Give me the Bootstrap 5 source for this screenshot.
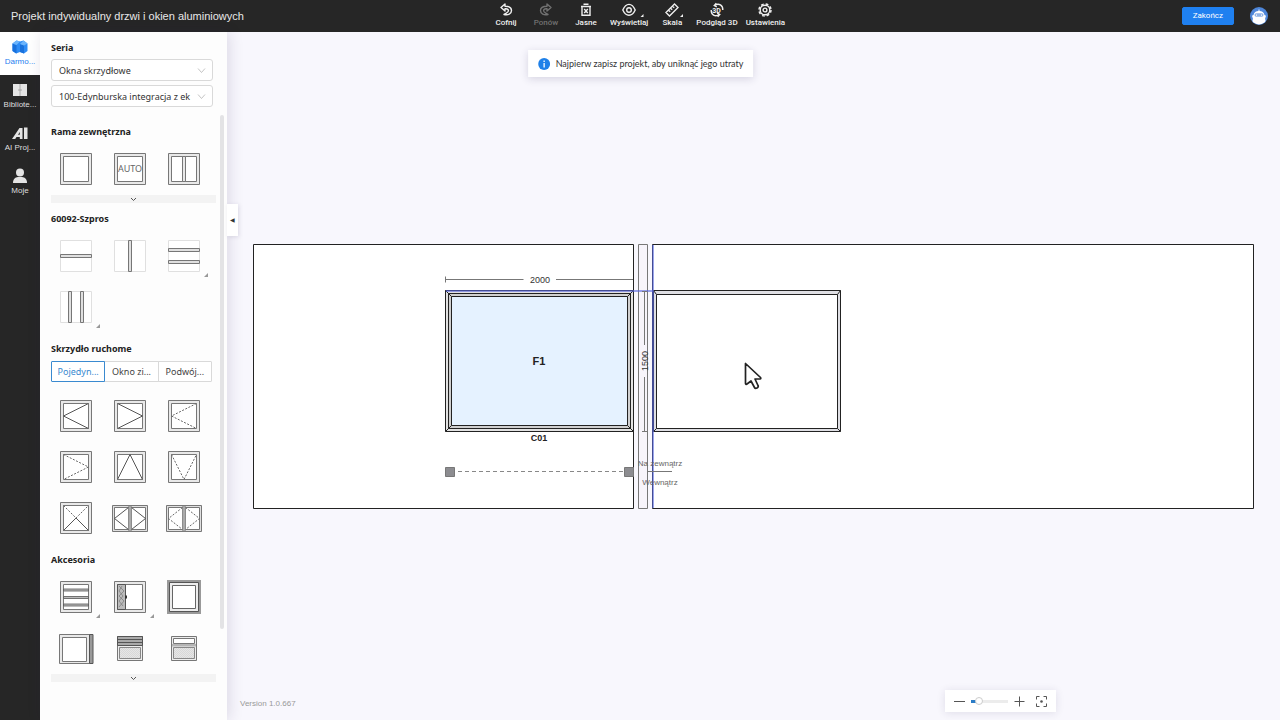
<!DOCTYPE html>
<html lang="pl">
<head>
<meta charset="utf-8">
<meta name="viewport" content="width=device-width, initial-scale=1">
<title>Projekt indywidualny drzwi i okien aluminiowych</title>
<link href="https://cdn.jsdelivr.net/npm/bootstrap@5.3.0/dist/css/bootstrap.min.css" rel="stylesheet">
<style>
  :root { --ink: #262626; --accent: #1f80f0; --ui: "Noto Sans", "Open Sans", sans-serif; --ui2: Roboto, "Liberation Sans", sans-serif; --arial: "Liberation Sans", Arial, sans-serif; }
  body { font-family: var(--ui); font-size: 9px; line-height: 16px; color: #222; background: #f8f7fd; }
  button { font: inherit; }
  .topbar { height: 32px; background: var(--ink); color: #e8e8e8; padding: 0 12px 0 11px; }
  .app-title { font: 11px/16px var(--arial); }
  .tool { min-width: 32px; color: #efefef; font: 500 8px/12px var(--ui2); }
  .tool svg { width: 14px; height: 14px; overflow: visible; }
  .tool:disabled { color: #999; }
  .icon-line { fill: none; stroke: currentColor; stroke-width: 1.4; }
  .btn-finish { --bs-btn-padding-x: 10px; --bs-btn-padding-y: 0; --bs-btn-font-size: 8px; --bs-btn-border-radius: 2px; --bs-btn-bg: var(--accent); --bs-btn-border-color: var(--accent); --bs-btn-line-height: 16px; font-family: var(--ui2); }
  .rail { width: 40px; background: var(--ink); }
  .rail a { height: 43px; padding-top: 7px; color: #dedede; font: 8px/14px var(--arial); }
  .rail a.active { background: #fff; color: var(--accent); }
  .rail svg { width: 16px; height: 16px; }
  .side { width: 187px; background: #fdfdfd; padding: 8px 0 0 11px; box-shadow: 2px 0 14px rgba(40,30,80,.14); z-index: 2; }
  .side h2 { font-size: 9px; line-height: 16px; font-weight: 700; margin: 0 0 4px; }
  .series { width: 162px; gap: 4px; }
  .series h2 { margin: 0 0 -1px; }
  .series .form-select { height: 22px; padding: 0 18px 0 7px; font-size: 9px; line-height: 19px; color: #333; border-color: #d9d9d9; border-radius: 3px; background-color: #fff; background-position: right 6px center; background-size: 9px 9px;
    background-image: url("data:image/svg+xml,%3csvg xmlns='http://www.w3.org/2000/svg' viewBox='0 0 9 9'%3e%3cpath fill='none' stroke='%23b5b5b5' stroke-width='.8' d='M1 2.5l3.5 4 3.5-4'/%3e%3c/svg%3e"); }
  .panel-scroll { padding-right: 3px; }
  .panel-body { width: 165px; padding-top: 9px; }
  .thumb { width: 4px; height: 85%; background: #e3e3e5; border-radius: 2px; }
  .parts { margin-left: -2px; width: 162px; }
  .part { height: 51px; padding: 7px 0 8px; }
  .part svg { width: 36px; height: 36px; display: block; margin: 0 auto; }
  .has-more::after { content: ""; position: absolute; right: 3px; bottom: 5px; border: 2px solid transparent; border-right-color: #999; border-bottom-color: #999; }
  .more-bar { height: 8px; background: #f3f3f3; }
  .sash-tabs { width: 161px; margin-bottom: 9px; }
  .sash-tabs .btn { --bs-btn-padding-x: 2px; --bs-btn-padding-y: 0; --bs-btn-font-size: 9px; --bs-btn-line-height: 19px; --bs-btn-color: #444; --bs-btn-border-color: #d9d9d9; --bs-btn-border-radius: 1px; --bs-btn-bg: #fff; --bs-btn-active-bg: #fff; --bs-btn-active-color: #3a8ad0; --bs-btn-active-border-color: #3a8ad0; width: 54px; }
  .collapse-tab { left: 0; top: 172px; width: 11px; height: 32px; background: #fff; color: #333; font-size: 6px; z-index: 3; box-shadow: 1px 1px 4px rgba(40,30,80,.12); }
  .notice { top: 18px; height: 27px; margin-left: -113px; padding: 0 10px; gap: 6px; background: #fff; box-shadow: 0 2px 8px rgba(40,30,80,.16); white-space: nowrap; color: #333; font-family: Lato, var(--ui); }
  .version { left: 13px; bottom: 8px; color: #999; font: 8px/16px var(--arial); }
  .zoombar { right: 224px; bottom: 8px; width: 111px; height: 22px; padding: 0 9px; background: #fff; color: #555; box-shadow: 0 1px 8px rgba(40,30,80,.12); }
  .zoombar svg { width: 11px; height: 11px; display: block; }
  .zoombar input { -webkit-appearance: none; appearance: none; width: 37px; height: 8px; margin: 0 6px; background: linear-gradient(90deg, #2a7cc7 5px, #ececec 5px) center / 100% 3px no-repeat; }
  .zoombar input::-webkit-slider-thumb { -webkit-appearance: none; width: 8px; height: 8px; border-radius: 50%; background: #fff; border: 1px solid #ccc; }
  .stage svg { display: block; }
  .stage text { font-family: var(--arial); }
</style>
</head>
<body class="d-flex flex-column min-vh-100">

<svg width="0" height="0" class="position-absolute" aria-hidden="true">
  <defs>
    <symbol id="frame" viewBox="-2 -2 36 36"><path d="M.5.5h31v31H.5z" fill="#e9e9e9" stroke="#777"/><path d="M3.500 3.500h25v25h-25z" fill="#fff" stroke="#777"/></symbol>
    <symbol id="ghost" viewBox="-2 -2 36 36"><path d="M.5.5h31v31H.5z" fill="#fff" stroke="#e0e0e0" /></symbol>
    <symbol id="double" viewBox="-2 -2 36 36"><path d="M-1.500 3.500h35v26h-35z" fill="#e0e0e0" stroke="#777"/><path d="M.5 5.500h14v22H.5zM17.500 5.500h14v22h-14z" fill="#fff" stroke="#777"/><path d="M14.500 4h3v25h-3z" fill="#aaa" stroke="#888" stroke-width=".5"/></symbol>
    <pattern id="mesh" width="2" height="2" patternUnits="userSpaceOnUse"><rect width="2" height="2" fill="#e6e6e6"/><path d="M0 0h1v1H0zM1 1h1v1H1z" fill="#d8d8d8"/></pattern>
  </defs>
</svg>

<header class="topbar d-flex align-items-center">
  <div class="col app-title text-nowrap">Projekt indywidualny drzwi i okien aluminiowych</div>
  <nav class="d-flex gap-2 h-100 me-1" aria-label="Narzędzia">
    <button class="tool btn border-0 p-0 d-flex flex-column align-items-center justify-content-center text-nowrap"><svg viewBox="0 0 14 14"><path class="icon-line" d="M6 1L2 4.500L6 8V5.800C9 5.500 10 7 9 8.600C8 10 7 10.500 5 11.500C9 12.500 12.500 11 12.500 7.500C12.500 4.500 10 3.200 6 3.200Z" stroke-linejoin="round"/></svg>Cofnij</button>
    <button class="tool btn border-0 p-0 d-flex flex-column align-items-center justify-content-center text-nowrap" disabled><svg viewBox="0 0 14 14"><path class="icon-line" d="M8 1L12 4.500L8 8V5.800C5 5.500 4 7 5 8.600C6 10 7 10.500 9 11.500C5 12.500 1.500 11 1.500 7.500C1.500 4.500 4 3.200 8 3.200Z" stroke-linejoin="round"/></svg>Ponów</button>
    <button class="tool btn border-0 p-0 d-flex flex-column align-items-center justify-content-center text-nowrap"><svg viewBox="0 0 14 14"><path class="icon-line" d="M2 3.500h10M4.500 1.300h5M3 4v8.300h8V4M5.200 6l3.600 4M8.800 6l-3.600 4"/></svg>Jasne</button>
    <button class="tool btn border-0 p-0 d-flex flex-column align-items-center justify-content-center text-nowrap"><svg viewBox="0 0 14 14"><path class="icon-line" d="M.8 7C4-.5 10-.5 13.200 7C10 14 4 14 .8 7Z"/><circle class="icon-line" cx="7" cy="7" r="2.300"/><path fill="currentColor" d="M21.500 11v3h-3z"/></svg>Wyświetlaj</button>
    <button class="tool btn border-0 p-0 d-flex flex-column align-items-center justify-content-center text-nowrap"><svg viewBox="0 0 14 14"><path class="icon-line" d="M9.500 1L13 4.500L4.500 13L1 9.500ZM3.500 7l1.700 1.700M5.500 5l1.700 1.700M7.500 3l1.700 1.700"/><path fill="currentColor" d="M18 11v3h-3z"/></svg>Skala</button>
    <button class="tool btn border-0 p-0 d-flex flex-column align-items-center justify-content-center text-nowrap"><svg viewBox="0 0 14 14"><path class="icon-line" d="M4.500 2.500C9-.5 13 2.500 12.800 7M9.500 11.500C5 14.500 1 11.500 1.200 7M6.300.3L4.300 2.500l2.500 1.300M7.700 13.700l2-2.200L7.200 10.200" stroke-width="1.200"/><text x="6.500" y="9.500" text-anchor="middle" font-size="7" font-weight="700" fill="currentColor">3D</text></svg>Podgląd 3D</button>
    <button class="tool btn border-0 p-0 d-flex flex-column align-items-center justify-content-center text-nowrap"><svg viewBox="0 0 14 14"><circle class="icon-line" cx="7" cy="7" r="4.800"/><circle cx="7" cy="7" r="6" fill="none" stroke="currentColor" stroke-width="1.500" stroke-dasharray="2.700 2.012"/><circle class="icon-line" cx="7" cy="7" r="1.900"/></svg>Ustawienia</button>
  </nav>
  <div class="col d-flex justify-content-end align-items-center gap-3">
    <button class="btn btn-primary btn-finish">Zakończ</button>
    <svg width="18" height="18" viewBox="0 0 18 18" role="img" aria-label="Profil"><circle cx="9" cy="9" r="9" fill="#4e86d8"/><path d="M3.500 8C4 5 6 4.200 8.500 4V2.500h1V4C12 4.200 14 5 14.500 8l1.500.7L15 12c1 1.500.5 2.800-1 3.800a9 9 0 0 1-10 0C2.500 14.800 2 13.500 3 12L2 8.700Z" fill="#fff"/><rect x="4.500" y="6.300" width="9" height="3.500" rx="1.700" fill="#8fb2e6"/><path d="M6.500 7.500v1.200M11.500 7.500v1.200" stroke="#fff"/></svg>
  </div>
</header>

<div class="d-flex flex-fill">
  <nav class="rail flex-shrink-0" aria-label="Sekcje">
    <a href="#" class="active d-flex flex-column align-items-center text-decoration-none text-nowrap"><svg viewBox="0 0 16 16"><path d="M.5 4.500L4.500 1.500 8 2.500l3.500-1 4 3v7.500L12 14.500 8 13l-4 1.500L.5 12z" fill="#2e8cf5"/><path d="M.5 4.500L4.500 6v8.500L.5 12zM8 5l4 1.500v8L8 13z" fill="#1971dc"/><path d="M.5 4.500l4-3L8 2.500 4.500 6zM8 5l3.500-3.500 4 3L12 6.500z" fill="#6bb4fc"/></svg>Darmo...</a>
    <a href="#" class="d-flex flex-column align-items-center text-decoration-none text-nowrap"><svg viewBox="0 0 16 16"><path d="M1 2h14v12H1z" fill="#e4e4e4"/><path d="M8 2v12M6 8h4" stroke="#999" stroke-width=".8"/></svg>Bibliote...</a>
    <a href="#" class="d-flex flex-column align-items-center text-decoration-none text-nowrap"><svg viewBox="0 0 16 16"><path d="M0 14L7.500 3h3v11H7.800v-2H4.500L3.200 14zM6 9.800h1.800V7zM12 2.500h3.500V14H12z" fill="#e4e4e4" fill-rule="evenodd"/></svg>AI Proj...</a>
    <a href="#" class="d-flex flex-column align-items-center text-decoration-none text-nowrap"><svg viewBox="0 0 16 16"><circle cx="8" cy="4.500" r="4" fill="#e4e4e4"/><path d="M1 15c0-4 2-5.500 5-6h4c3 .5 5 2 5 6z" fill="#e4e4e4"/></svg>Moje</a>
  </nav>

  <aside class="side flex-shrink-0 d-flex flex-column">
    <div class="series d-flex flex-column">
      <h2>Seria</h2>
      <select class="form-select" aria-label="Typ"><option>Okna skrzydłowe</option></select>
      <select class="form-select" aria-label="Model"><option>100-Edynburska integracja z ek</option></select>
    </div>
    <div class="panel-scroll d-flex flex-fill justify-content-between mt-2">
      <div class="panel-body">
        <section class="mb-2">
          <h2>Rama zewnętrzna</h2>
          <div class="parts row row-cols-3 g-0">
            <button class="part btn border-0" aria-label="Rama"><svg><use href="#frame"/></svg></button>
            <button class="part btn border-0" aria-label="Rama automatyczna"><svg viewBox="-2 -2 36 36"><use href="#frame" x="-2" y="-2" width="36" height="36"/><text x="16" y="19" text-anchor="middle" font-size="9" fill="#666">AUTO</text></svg></button>
            <button class="part btn border-0" aria-label="Rama dzielona"><svg viewBox="-2 -2 36 36"><use href="#frame" x="-2" y="-2" width="36" height="36"/><path d="M14.500 3.500h3v25h-3z" fill="#e9e9e9" stroke="#777"/></svg></button>
          </div>
          <button class="more-bar btn border-0 rounded-0 p-0 w-100 d-flex justify-content-center align-items-center" aria-label="Rozwiń ramy"><svg width="7" height="5"><path d="M1 1l2.500 2.500L6 1" fill="none" stroke="#555"/></svg></button>
        </section>
        <section class="mb-2">
          <h2>60092-Szpros</h2>
          <div class="parts row row-cols-3 g-0">
            <button class="part btn border-0" aria-label="Szpros poziomy"><svg viewBox="-2 -2 36 36"><use href="#ghost" x="-2" y="-2" width="36" height="36"/><path d="M.5 14.500h31v3H.5z" fill="#e0e0e0" stroke="#777"/></svg></button>
            <button class="part btn border-0" aria-label="Szpros pionowy"><svg viewBox="-2 -2 36 36"><use href="#ghost" x="-2" y="-2" width="36" height="36"/><path d="M14.500.5h3v31h-3z" fill="#e0e0e0" stroke="#777"/></svg></button>
            <button class="part btn border-0 position-relative has-more" aria-label="Dwa szprosy poziome"><svg viewBox="-2 -2 36 36"><use href="#ghost" x="-2" y="-2" width="36" height="36"/><path d="M.5 8.500h31v3H.5zM.5 20.500h31v3H.5z" fill="#e0e0e0" stroke="#777"/></svg></button>
            <button class="part btn border-0 position-relative has-more" aria-label="Dwa szprosy pionowe"><svg viewBox="-2 -2 36 36"><use href="#ghost" x="-2" y="-2" width="36" height="36"/><path d="M8.500.5h3v31h-3zM20.500.5h3v31h-3z" fill="#e0e0e0" stroke="#777"/></svg></button>
          </div>
        </section>
        <section class="mb-2">
          <h2>Skrzydło ruchome</h2>
          <div class="sash-tabs btn-group" role="group" aria-label="Rodzaj skrzydła">
            <button class="btn active text-nowrap">Pojedyn...</button>
            <button class="btn text-nowrap">Okno zi...</button>
            <button class="btn text-nowrap">Podwój...</button>
          </div>
          <div class="parts row row-cols-3 g-0">
            <button class="part btn border-0" aria-label="Lewe"><svg viewBox="-2 -2 36 36"><use href="#frame" x="-2" y="-2" width="36" height="36"/><path d="M28.500 3.500L3.500 16l25 12.500" fill="none" stroke="#555"/></svg></button>
            <button class="part btn border-0" aria-label="Prawe"><svg viewBox="-2 -2 36 36"><use href="#frame" x="-2" y="-2" width="36" height="36"/><path d="M3.500 3.500L28.500 16l-25 12.500" fill="none" stroke="#555"/></svg></button>
            <button class="part btn border-0" aria-label="Lewe do wewnątrz"><svg viewBox="-2 -2 36 36"><use href="#frame" x="-2" y="-2" width="36" height="36"/><path d="M28.500 3.500L3.500 16l25 12.500" fill="none" stroke="#666" stroke-dasharray="2 1.500"/></svg></button>
            <button class="part btn border-0" aria-label="Prawe do wewnątrz"><svg viewBox="-2 -2 36 36"><use href="#frame" x="-2" y="-2" width="36" height="36"/><path d="M3.500 3.500L28.500 16l-25 12.500" fill="none" stroke="#666" stroke-dasharray="2 1.500"/></svg></button>
            <button class="part btn border-0" aria-label="Uchylne"><svg viewBox="-2 -2 36 36"><use href="#frame" x="-2" y="-2" width="36" height="36"/><path d="M3.500 28.500L16 3.500l12.500 25" fill="none" stroke="#555"/></svg></button>
            <button class="part btn border-0" aria-label="Odchylne"><svg viewBox="-2 -2 36 36"><use href="#frame" x="-2" y="-2" width="36" height="36"/><path d="M3.500 3.500L16 28.500l12.500-25" fill="none" stroke="#666" stroke-dasharray="2 1.500"/></svg></button>
            <button class="part btn border-0" aria-label="Rozwierno-uchylne"><svg viewBox="-2 -2 36 36"><use href="#frame" x="-2" y="-2" width="36" height="36"/><path d="M3.500 28.500L16 16l12.500 12.500" fill="none" stroke="#555"/><path d="M3.500 3.500L16 16l12.500-12.500" fill="none" stroke="#666" stroke-dasharray="2 1.500"/></svg></button>
            <button class="part btn border-0" aria-label="Dwuskrzydłowe"><svg viewBox="-2 -2 36 36"><use href="#double" x="-2" y="-2" width="36" height="36"/><path d="M14.500 5.500L.5 16.500l14 11M17.500 5.500l14 11-14 11" fill="none" stroke="#555"/></svg></button>
            <button class="part btn border-0" aria-label="Dwuskrzydłowe do wewnątrz"><svg viewBox="-2 -2 36 36"><use href="#double" x="-2" y="-2" width="36" height="36"/><path d="M14.500 5.500L.5 16.500l14 11M17.500 5.500l14 11-14 11" fill="none" stroke="#666" stroke-dasharray="2 1.500"/></svg></button>
          </div>
        </section>
        <section>
          <h2>Akcesoria</h2>
          <div class="parts row row-cols-3 g-0">
            <button class="part btn border-0 position-relative has-more" aria-label="Żaluzje"><svg viewBox="-2 -2 36 36"><use href="#frame" x="-2" y="-2" width="36" height="36"/><path d="M3.500 8h25v2h-25zM3.500 15.500h25v2h-25zM3.500 23h25v2h-25z" fill="#bbb" stroke="#555" stroke-width=".8"/></svg></button>
            <button class="part btn border-0 position-relative has-more" aria-label="Moskitiera"><svg viewBox="-2 -2 36 36"><use href="#frame" x="-2" y="-2" width="36" height="36"/><path d="M3.500 3.500h8v25h-8z" fill="#bbb" stroke="#555"/><path d="M8 5l-3 5 4 5-4 5 4 5M5 5l5 5-5 5 5 5-5 6" stroke="#777" stroke-width=".7" fill="none"/><path d="M11 14.500h2v3h-2z" fill="#333"/></svg></button>
            <button class="part btn border-0" aria-label="Opaska"><svg viewBox="-2 -2 36 36"><path d="M.5.5h31v31H.5z" fill="#fff" stroke="#999" stroke-width="3"/><path d="M1.500 1.500h29v29h-29z" fill="#ededed" stroke="#555"/><path d="M4.500 4.500h23v23h-23z" fill="#fff" stroke="#666"/></svg></button>
            <button class="part btn border-0" aria-label="Profil boczny"><svg viewBox="-2 -2 36 36"><path d="M-.5 2.500h30v29h-30z" fill="#e9e9e9" stroke="#777"/><path d="M2.500 5.500h24v24h-24z" fill="#fff" stroke="#777"/><path d="M29.500 2.500h3.500v29h-3.500z" fill="#999" stroke="#555"/></svg></button>
            <button class="part btn border-0" aria-label="Roleta"><svg viewBox="-2 -2 36 36"><path d="M3.500 4.500h25v24h-25z" fill="#eee" stroke="#777"/><path d="M3.500 4.500h25v9h-25z" fill="#aaa" stroke="#555"/><path d="M3.500 7.500h25M3.500 10.500h25" stroke="#555"/><path d="M5.500 15.500h21v11h-21z" fill="url(#mesh)" stroke="#888"/></svg></button>
            <button class="part btn border-0" aria-label="Nawiewnik"><svg viewBox="-2 -2 36 36"><path d="M3.500 4.500h25v24h-25z" fill="#eee" stroke="#777"/><path d="M5.500 6.500h21v5h-21z" fill="#fff" stroke="#777"/><path d="M4 12h24v2.500H4z" fill="#b5b5b5"/><path d="M5.500 15.500h21v11h-21z" fill="url(#mesh)" stroke="#888"/></svg></button>
          </div>
          <button class="more-bar btn border-0 rounded-0 p-0 w-100 d-flex justify-content-center align-items-center" aria-label="Rozwiń akcesoria"><svg width="7" height="5"><path d="M1 1l2.500 2.500L6 1" fill="none" stroke="#555"/></svg></button>
        </section>
      </div>
      <div class="thumb"></div>
    </div>
  </aside>

  <main class="stage flex-fill position-relative">
    <button class="collapse-tab position-absolute border-0 p-0" aria-label="Zwiń panel">◀</button>
    <svg class="w-100 h-100" viewBox="227 32 1053 688" role="img" aria-label="Rysunek okna C01">
      <g fill="#fff" stroke="#222">
        <path d="M253.500 244.500h380v264h-380zM652.500 244.500h601v264h-601z"/>
        <path d="M638.500 244.500h9v264h-9z" fill="#f7f4fb" stroke="#777"/>
      </g>
      <path d="M445.500 276.500v6M445.500 279.500h78M556 279.500h77" stroke="#777"/>
      <g stroke="#222">
        <path d="M445.500 290.500h188v141h-188z" fill="#e2e2e2"/>
        <path d="M448.500 293.500h182v135h-182z" fill="#d0d0d0"/>
        <path d="M451.500 296.500h176v129h-176z" fill="#e5f2ff"/>
        <path d="M445.500 290.500l6 6M633.500 290.500l-6 6M445.500 431.500l6-6M633.500 431.500l-6-6"/>
        <path d="M653.500 290.500h187v141h-187z" fill="#dfdfe4"/>
        <path d="M656.500 294.500h181v134h-181z" fill="#fff"/>
        <path d="M653.500 290.500l3 4M840.500 290.500l-3 4M653.500 431.500l3-3M840.500 431.500l-3-3"/>
      </g>
      <path d="M446 291h207" stroke="#5a68e0" stroke-width="2" opacity=".6"/>
      <path d="M653 245v263" stroke="#5a68e0" stroke-width="2" opacity=".6"/>
      <path d="M644.500 291v54M644.500 377v54M642 431.500h5M642 291.500h5M648 471.500h24" stroke="#777"/>
      <path d="M458 471.500h166" stroke="#888" stroke-dasharray="4 3"/>
      <path d="M445.500 467.500h9v9h-9zM624.500 467.500h9v9h-9z" fill="#8c8c90" stroke="#777"/>
      <g text-anchor="middle" fill="#333" font-size="9">
        <text x="540" y="283">2000</text>
        <text transform="translate(648 361) rotate(-90)">1500</text>
        <text x="539" y="365" font-size="11" font-weight="700" fill="#222">F1</text>
        <text x="539" y="441" font-weight="700" fill="#222">C01</text>
        <text x="660" y="466" font-size="8" fill="#666">Na zewnątrz</text>
        <text x="660" y="485" font-size="8" fill="#666">Wewnątrz</text>
      </g>
      <path d="M745.500 363.500v20c0 1 1 1 1.500.5l4-3 3.500 6.500c.5 1 1.500 1 2.500.5s1.500-1.500 1-2.500l-3-6.500h5c1 0 1-1 .5-1.500z" fill="#fff" stroke="#222" stroke-width="1.700" stroke-linejoin="round"/>
    </svg>
    <div class="notice position-absolute start-50 translate-middle-x d-flex align-items-center" role="status"><svg width="12" height="12" viewBox="0 0 12 12"><circle cx="6" cy="6" r="6" fill="#1f80e8"/><path d="M6 2.500v1.500M6 5v4.500" stroke="#fff" stroke-width="1.300"/></svg>Najpierw zapisz projekt, aby uniknąć jego utraty</div>
    <div class="version position-absolute">Version 1.0.667</div>
    <div class="zoombar position-absolute d-flex align-items-center">
      <button class="btn border-0 p-0" aria-label="Pomniejsz"><svg viewBox="0 0 11 11"><path d="M0 5.500h11" stroke="#555"/></svg></button>
      <input type="range" min="0" max="100" value="15" aria-label="Powiększenie">
      <button class="btn border-0 p-0" aria-label="Powiększ"><svg viewBox="0 0 11 11"><path d="M.5 5.500h10M5.500.5v10" stroke="#555"/></svg></button>
      <button class="btn border-0 p-0 ms-auto" aria-label="Dopasuj"><svg viewBox="0 0 11 11"><path d="M.5 3.500v-3h3M7.500.5h3v3M10.500 7.500v3h-3M3.500 10.500h-3v-3" fill="none" stroke="#555"/><circle cx="5.500" cy="5.500" r="1.300" fill="#555"/></svg></button>
    </div>
  </main>
</div>
<script src="https://cdn.jsdelivr.net/npm/bootstrap@5.3.0/dist/js/bootstrap.bundle.min.js"></script>
</body>
</html>
